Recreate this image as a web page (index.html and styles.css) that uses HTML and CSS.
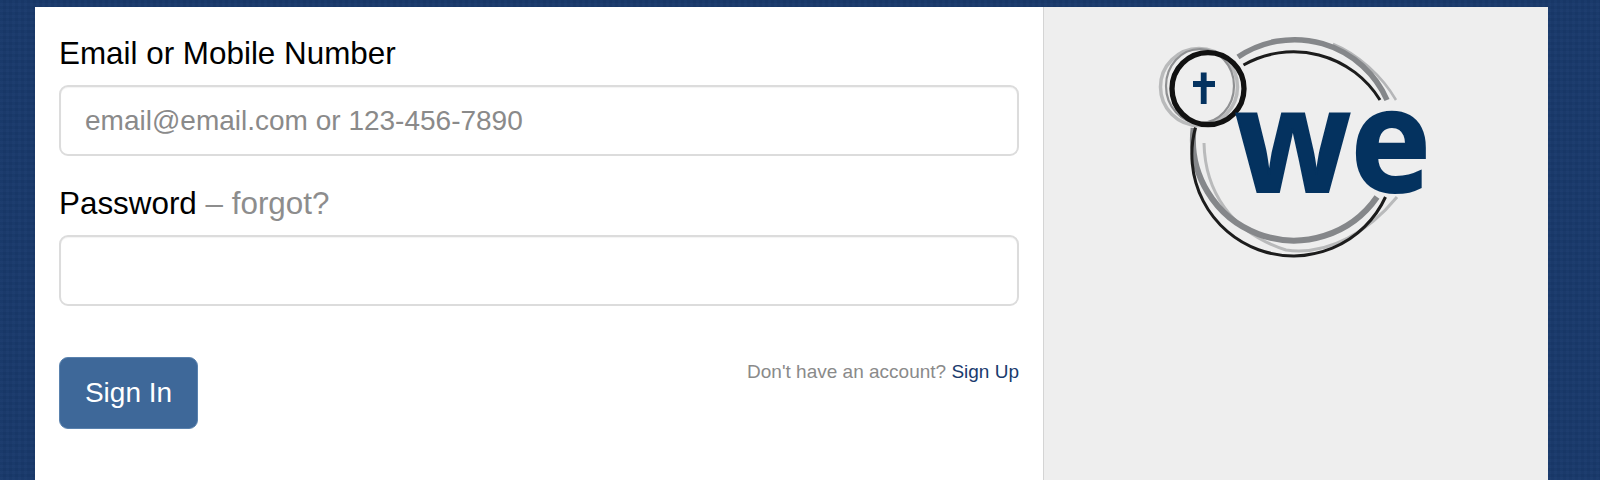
FILE: index.html
```html
<!DOCTYPE html>
<html lang="en">
<head>
<meta charset="utf-8">
<title>Sign In</title>
<link rel="stylesheet" href="styles.css">
</head>
<body>
<main class="card">
  <form class="form-pane">
    <div class="field">
      <label class="label" for="email">Email or Mobile Number</label>
      <input class="input" id="email" type="text" placeholder="email@email.com or 123-456-7890">
    </div>
    <div class="field">
      <label class="label" for="password">Password <span class="muted">– forgot?</span></label>
      <input class="input" id="password" type="password">
    </div>
    <div class="actions">
      <button class="btn" type="button">Sign In</button>
      <p class="signup">Don't have an account? <a href="#">Sign Up</a></p>
    </div>
  </form>
  <aside class="logo-pane">
    <svg class="logo" width="340" height="280" viewBox="0 0 340 280" aria-label="we logo">
      <g fill="none">
        <path d="M213 44C238 54 262 76 276 100" stroke="#b5b6b8" stroke-width="2.5"/>
        <path d="M118 57A101 101 0 0 1 267 100" stroke="#85878a" stroke-width="5.5"/>
        <path d="M123.5 65A101.5 101.5 0 0 1 260 100" stroke="#1c1c1c" stroke-width="3"/>
        <path d="M84 143C85 190 110 232 166 250C210 256 250 230 277 197" stroke="#b9babb" stroke-width="3"/>
        <path d="M73.6 128A101 101 0 0 0 257 197" stroke="#85878a" stroke-width="6"/>
        <path d="M75.5 127.5A101.5 101.5 0 0 0 265.5 197" stroke="#1c1c1c" stroke-width="3"/>
        <circle cx="79" cy="87" r="38.5" stroke="#b9babb" stroke-width="3.5"/>
        <ellipse cx="80" cy="86" rx="34" ry="37" stroke="#8f9092" stroke-width="2.2"/>
        <circle cx="88" cy="88.7" r="36" stroke="#111" stroke-width="5.3"/>
      </g>
      <path class="cross" d="M83.7 72.5V104M73 84H95" fill="none" stroke="#04325f" stroke-width="5.8"/>
      <text class="logo-word" transform="translate(115 192) scale(.94 1)">we</text>
    </svg>
  </aside>
</main>
</body>
</html>
```
FILE: styles.css
```css
* { box-sizing: border-box; }
html, body { height: 100%; }
body {
  margin: 0;
  overflow: hidden;
  padding: 7px 52px 0 35px;
  font-family: "Liberation Sans", Arial, sans-serif;
  background-color: #18396b;
  background-image:
    repeating-linear-gradient(0deg, rgba(255,255,255,.012) 0 3px, rgba(0,0,0,.018) 3px 6px),
    repeating-linear-gradient(90deg, rgba(255,255,255,.012) 0 3px, rgba(0,0,0,.018) 3px 6px);
}
.card {
  display: flex;
  height: 473px;
  background: #fff;
}
.form-pane {
  flex: 0 0 1009px;
  padding: 27px 24px 0;
  border-right: 1px solid #d4d4d4;
}
.field { margin-bottom: 28px; }
.label {
  display: block;
  margin-bottom: 11px;
  font-size: 31.4px;
  line-height: 40px;
  color: #000;
}
.muted { color: #8d8d8d; }
.input {
  display: block;
  width: 100%;
  height: 71px;
  padding: 0 24px;
  font: 28px "Liberation Sans", Arial, sans-serif;
  color: #333;
  background: #fff;
  border: 2px solid #dcdcdc;
  border-radius: 9px;
  box-shadow: inset 0 1px 1px rgba(0,0,0,.05);
}
.input::placeholder { color: #8a8a8a; opacity: 1; }
.actions {
  display: flex;
  justify-content: space-between;
  align-items: flex-start;
  margin-top: 51px;
}
.btn {
  width: 139px;
  height: 72px;
  font: 28px "Liberation Sans", Arial, sans-serif;
  color: #fff;
  background: #3e6899;
  border: 1px solid #5a82ae;
  border-radius: 9px;
}
.signup {
  margin: 0;
  padding-top: 4px;
  font-size: 19px;
  line-height: 22px;
  color: #8a8a8a;
}
.signup a { color: #1a3b6d; text-decoration: none; }
.logo-pane {
  flex: 1;
  padding-left: 76px;
  background: #eeeeee;
}
.logo { display: block; margin-top: -7px; }
.logo-word {
  font-family: "Open Sans", sans-serif;
  font-size: 144px;
  font-weight: 700;
  fill: #04325f;
  stroke: #04325f;
  stroke-width: 2px;
}
```
